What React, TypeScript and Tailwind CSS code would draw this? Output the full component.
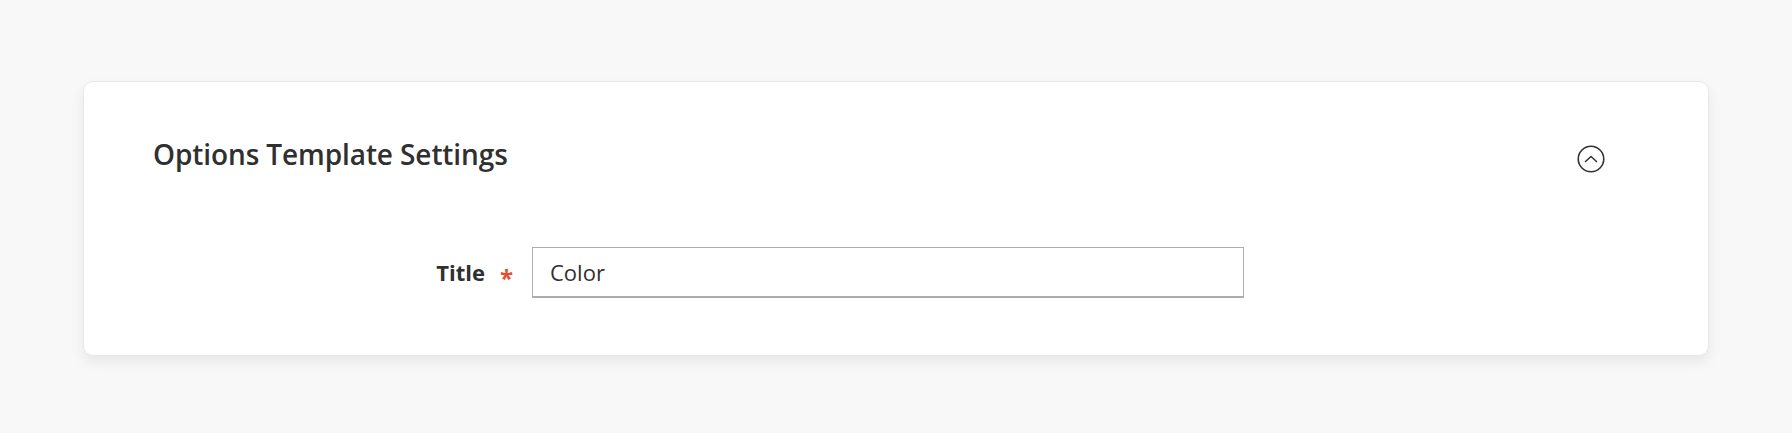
export default function App() {
  return (
    <div
      className="min-h-screen bg-[#f8f8f8] px-[83px] pt-[81px] pb-[77px]"
      style={{ fontFamily: '"Open Sans", "Liberation Sans", sans-serif' }}
    >
      {/* Section card */}
      <div className="h-[275px] rounded-[10px] border border-[#e8e8e8] bg-white shadow-[0_6px_14px_rgba(0,0,0,0.07)]">
        {/* Header */}
        <div className="flex items-start justify-between pl-[69px] pr-[103px] pt-[55px]">
          <h2 className="text-[28px] leading-[34px] font-semibold tracking-[-0.1px] text-[#303030]">
            Options Template Settings
          </h2>
          <button className="mt-[8px] h-[28px] w-[28px] text-[#333]" aria-label="Collapse">
            <svg viewBox="0 0 28 28" width="28" height="28" fill="none" stroke="currentColor">
              <circle cx="14" cy="14" r="12.75" strokeWidth="1.6" />
              <path d="M8.5 16.5 L14 11.5 L19.5 16.5" strokeWidth="1.6" strokeLinecap="round" strokeLinejoin="round" />
            </svg>
          </button>
        </div>

        {/* Form row */}
        <div className="mt-[74px] flex items-center">
          <label className="flex w-[429px] items-center justify-end">
            <span className="text-[22px] font-bold text-[#303030]">Title</span>
            <span className="ml-[15px] translate-y-[5px] text-[24px] leading-none font-bold text-[#e3502b]">*</span>
          </label>
          <input
            defaultValue="Color"
            className="ml-[19px] h-[51px] w-[712px] border border-b-2 border-[#adadad] bg-white px-[17px] text-[22px] text-[#303030] outline-none"
          />
        </div>
      </div>
    </div>
  )
}
